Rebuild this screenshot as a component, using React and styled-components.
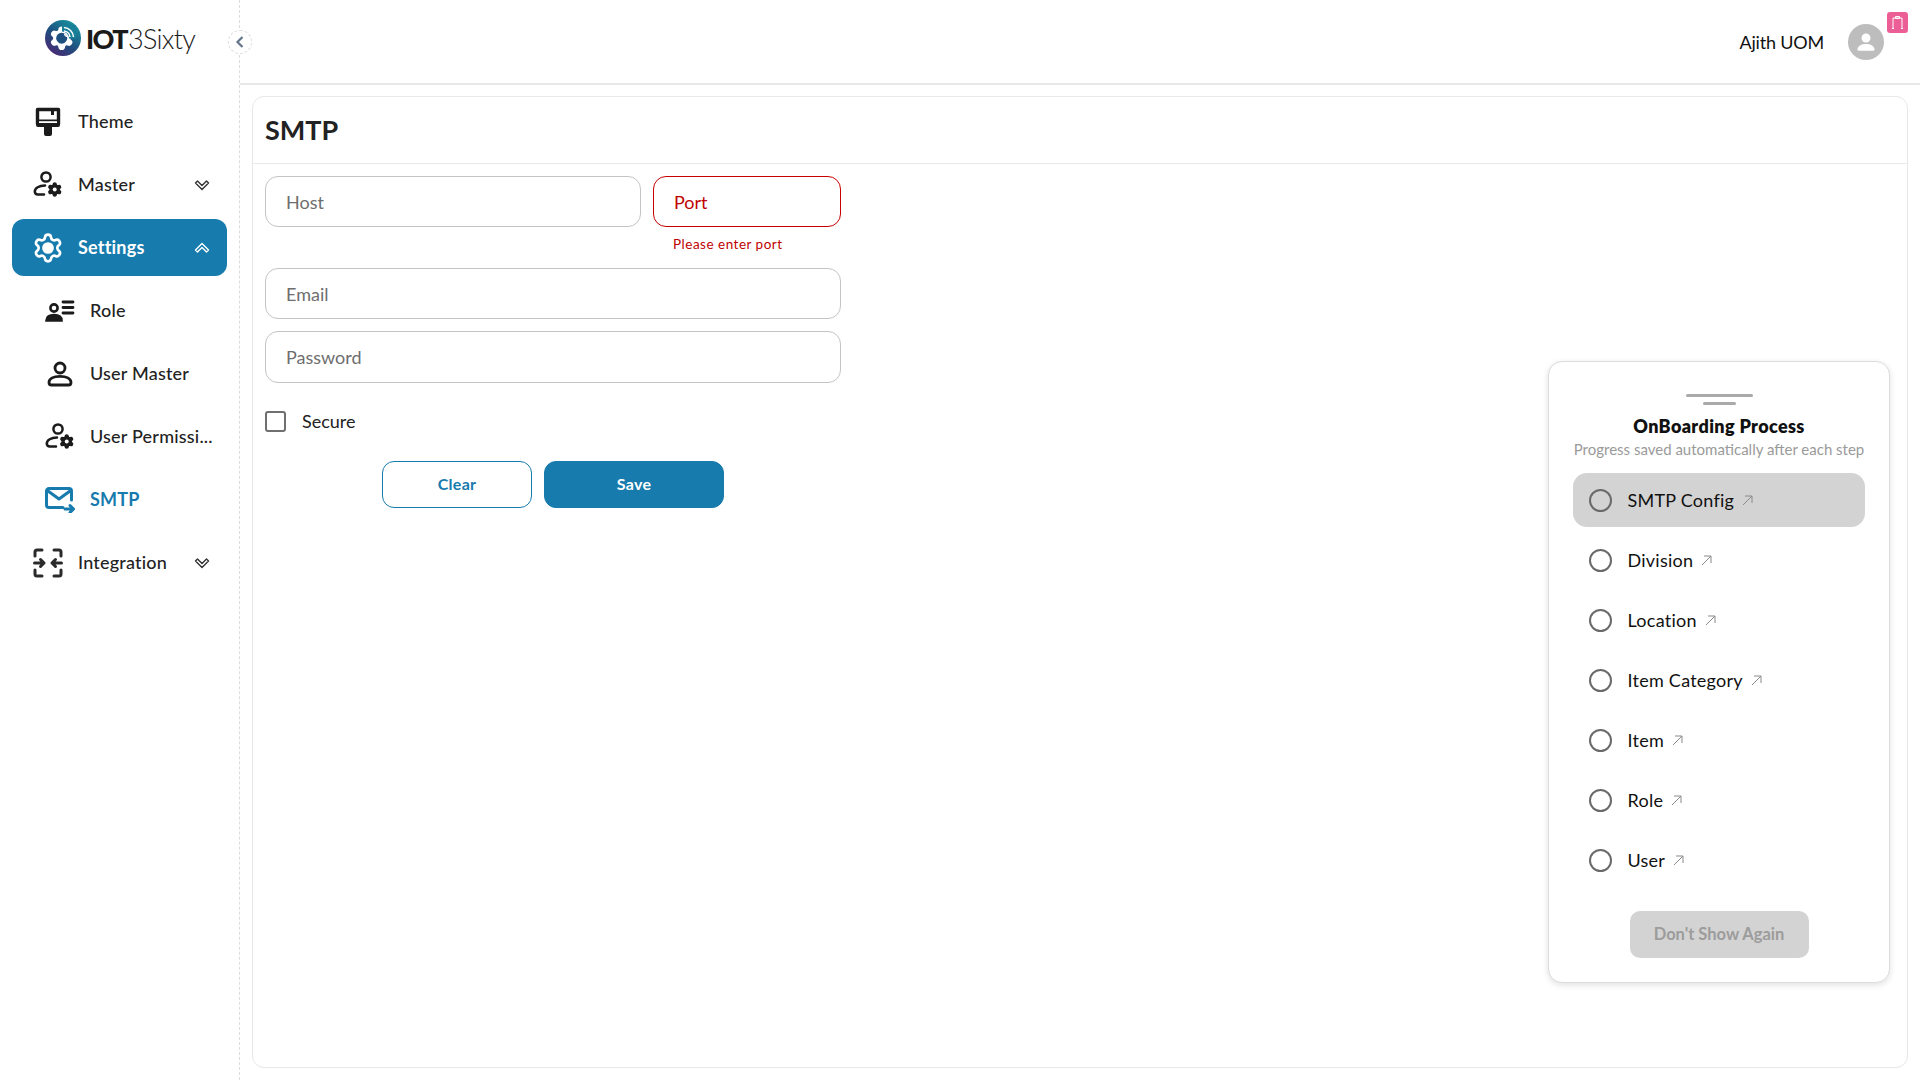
import React from "react";
import styled, { createGlobalStyle } from "styled-components";

const BLUE = "#177bad";
const INK = "#222222";
const FONT = `"Lato", "Noto Sans", sans-serif`;
const GEAR = "M9.671 4.136a2.34 2.34 0 0 1 4.659 0 2.34 2.34 0 0 0 3.319 1.915 2.34 2.34 0 0 1 2.33 4.033 2.34 2.34 0 0 0 0 3.831 2.34 2.34 0 0 1-2.33 4.033 2.34 2.34 0 0 0-3.319 1.915 2.34 2.34 0 0 1-4.659 0 2.34 2.34 0 0 0-3.32-1.915 2.34 2.34 0 0 1-2.33-4.033 2.34 2.34 0 0 0 0-3.831A2.34 2.34 0 0 1 6.35 6.051a2.34 2.34 0 0 0 3.319-1.915";

const Global = createGlobalStyle`
  html, body { margin: 0; padding: 0; background: #fff; }
  body { font-family: ${FONT}; color: ${INK}; }
  * { box-sizing: border-box; }
`;

const Page = styled.div`
  display: flex;
  width: 1920px;
  height: 1080px;
  overflow: hidden;
  position: relative;
  background: #fff;
`;
const Sidebar = styled.aside`
  position: relative;
  flex: 0 0 240px;
  width: 240px;
  min-width: 0;
  height: 100%;
  border-right: 1px dashed #dcdcdc;
  padding: 0 12px;
`;
const LogoRow = styled.div`
  display: flex;
  align-items: center;
  gap: 5px;
  height: 76px;
  padding: 0 0 0 33px;
`;
const LogoText = styled.div`
  font-size: 27px;
  line-height: 1;
  color: #1a1a1a;
  font-weight: 300;
  letter-spacing: -0.7px;
  white-space: nowrap;
  margin-top: 1px;
  b { font-weight: 900; letter-spacing: -1.6px; margin-right: 1px; }
`;
const Collapse = styled.button`
  position: absolute;
  top: 30px;
  right: -13px;
  width: 24px;
  height: 24px;
  border-radius: 50%;
  background: #fff;
  border: 1px dashed #dcdcdc;
  display: flex;
  align-items: center;
  justify-content: center;
  padding: 0;
`;
const Nav = styled.nav`
  display: flex;
  flex-direction: column;
  gap: 6px;
  margin-top: 17px;
`;
const NavItem = styled.div`
  display: flex;
  align-items: center;
  min-width: 0;
  height: 57px;
  border-radius: 12px;
  padding-left: ${(p) => (p.$sub ? "32px" : "20px")};
  padding-right: 17px;
  background: ${(p) => (p.$active ? BLUE : "transparent")};
  color: ${(p) => (p.$active ? "#fff" : p.$current ? BLUE : INK)};
  font-weight: ${(p) => (p.$active || p.$current ? 700 : 500)};
`;
const NavIcon = styled.span`
  flex: 0 0 32px;
  width: 32px;
  height: 32px;
  margin-right: 14px;
  display: flex;
  align-items: center;
  justify-content: center;
`;
const NavLabel = styled.span`
  flex: 1;
  min-width: 0;
  font-size: 18px;
  letter-spacing: 0.2px;
  white-space: nowrap;
  padding-bottom: 2px;
`;
const Main = styled.main`
  flex: 1;
  display: flex;
  flex-direction: column;
  min-width: 0;
`;
const Topbar = styled.header`
  flex: 0 0 85px;
  display: flex;
  align-items: center;
  justify-content: flex-end;
  padding: 0 36px 0 0;
  border-bottom: 2px solid #e8e8e8;
  position: relative;
`;
const UserName = styled.span`
  font-size: 18px;
  color: #111;
  margin-right: 24px;
  letter-spacing: -0.2px;
`;
const Avatar = styled.span`
  width: 36px;
  height: 36px;
  border-radius: 50%;
  background: #bdbdbd;
  display: flex;
  align-items: center;
  justify-content: center;
`;
const Badge = styled.span`
  position: absolute;
  top: 12px;
  right: 12px;
  width: 21px;
  height: 21px;
  border-radius: 3px;
  background: #ec5f96;
  display: flex;
  align-items: center;
  justify-content: center;
`;
const Content = styled.div`
  flex: 1;
  padding: 11px 12px 12px 12px;
  min-height: 0;
`;
const Card = styled.section`
  height: 100%;
  border: 1px solid #e8e8e8;
  border-radius: 12px;
`;
const CardHead = styled.div`
  height: 67px;
  display: flex;
  align-items: center;
  padding: 0 12px;
  border-bottom: 1px solid #e8e8e8;
`;
const Title = styled.h1`
  margin: 0 0 2px;
  font-size: 27px;
  font-weight: 700;
  color: #222;
`;
const Form = styled.form`
  width: 588px;
  margin: 12px 0 0 12px;
  display: flex;
  flex-direction: column;
`;
const HostRow = styled.div`
  display: grid;
  grid-template-columns: 376px 188px;
  gap: 12px;
  height: 92px;
`;
const Field = styled.div`
  display: flex;
  flex-direction: column;
`;
const Input = styled.input`
  width: ${(p) => (p.$wide ? "576px" : "100%")};
  height: ${(p) => (p.$tall ? "52px" : "51px")};
  border-radius: 13px;
  border: 1px solid ${(p) => (p.$error ? "#c80000" : "#c4c4c4")};
  padding: 0 20px;
  font-family: ${FONT};
  font-size: 18px;
  background: #fff;
  outline: none;
  &::placeholder { color: ${(p) => (p.$error ? "#c00000" : "#6e6e6e")}; opacity: 1; }
`;
const ErrorText = styled.span`
  color: #c00000;
  font-size: 13.5px;
  line-height: 16px;
  letter-spacing: 0.5px;
  margin: 9px 0 0 20px;
`;
const WideRows = styled.div`
  display: flex;
  flex-direction: column;
  gap: 12px;
`;
const SecureRow = styled.label`
  display: flex;
  align-items: center;
  gap: 16px;
  margin-top: 27px;
  height: 22px;
  font-size: 18px;
  color: #222;
`;
const CheckBox = styled.span`
  width: 21px;
  height: 21px;
  border: 2.5px solid #6f6f6f;
  border-radius: 3px;
  display: block;
`;
const Actions = styled.div`
  display: flex;
  gap: 12px;
  margin: 29px 0 0 117px;
`;
const Btn = styled.button`
  width: ${(p) => (p.$solid ? "180px" : "150px")};
  height: 47px;
  padding: 0 0 2px;
  border-radius: 12px;
  border: 1px solid ${BLUE};
  background: ${(p) => (p.$solid ? BLUE : "#fff")};
  color: ${(p) => (p.$solid ? "#fff" : BLUE)};
  font-family: ${FONT};
  font-size: 16px;
  font-weight: 700;
  letter-spacing: 0.3px;
`;
const Panel = styled.aside`
  position: absolute;
  left: 1548px;
  top: 361px;
  width: 342px;
  height: 622px;
  background: #fff;
  border: 1px solid #dcdcdc;
  border-radius: 14px;
  box-shadow: 0 2px 6px rgba(0, 0, 0, 0.12);
  padding: 32px 24px 0;
  display: flex;
  flex-direction: column;
  align-items: center;
`;
const Handle = styled.span`
  display: block;
  height: 3px;
  border-radius: 2px;
  background: #aaaaaa;
  width: ${(p) => p.$w}px;
  margin-bottom: 5px;
`;
const PanelTitle = styled.h2`
  margin: 4px 0 0;
  font-size: 18px;
  line-height: 24px;
  font-weight: 800;
  letter-spacing: 0.35px;
  color: #111;
`;
const PanelSub = styled.p`
  margin: 1px 0 0;
  font-size: 15px;
  line-height: 20px;
  color: #9a9a9a;
  white-space: nowrap;
`;
const Steps = styled.ul`
  list-style: none;
  margin: 14px 0 0;
  padding: 0;
  width: 292px;
  display: flex;
  flex-direction: column;
  gap: 6px;
`;
const Step = styled.li`
  display: flex;
  align-items: center;
  height: 54px;
  padding-left: 16px;
  border-radius: 14px;
  background: ${(p) => (p.$on ? "#d3d3d3" : "transparent")};
  font-size: 18px;
  letter-spacing: 0.25px;
  color: #111;
`;
const Radio = styled.span`
  width: 23px;
  height: 23px;
  border-radius: 50%;
  border: 2px solid #6a6a6a;
  margin-right: 15.5px;
`;
const StepArrow = styled.svg`
  width: 11px;
  height: 11px;
  margin-left: 8px;
`;
const DontShow = styled.button`
  margin-top: 23.5px;
  width: 179px;
  height: 47px;
  border: none;
  border-radius: 10px;
  background: #d3d3d3;
  color: #9c9c9c;
  font-family: ${FONT};
  font-size: 16.5px;
  font-weight: 700;
`;

const Chevrons = ({ up, color }) => (
  <svg width="16" height="12" viewBox="0 0 16 12">
    <path d="M1.5 4 3.5 2 8 6.5 12.5 2 14.5 4 8 10.5Z" fill="none" stroke={color} strokeWidth="1.4" strokeLinejoin="round" transform={up ? "rotate(180 8 6)" : undefined} />
  </svg>
);

const SmallGear = ({ x, y, s, c }) => (
  <g transform={`translate(${x} ${y}) scale(${s})`}>
    <path d={GEAR} fill={c} stroke={c} strokeWidth="2" />
    <circle cx="12" cy="12" r="3" fill="#fff" stroke="none" />
  </g>
);

const IconTheme = () => (
  <svg width="26" height="30" viewBox="0 0 26 30">
    <path d="M2.5 2.5h21v14.500h-21z" fill="none" stroke="#1b1b1b" strokeWidth="3.400" strokeLinejoin="round" />
    <path d="M1 12.500h24v5.500a2 2 0 0 1-2 2H17v7a2 2 0 0 1-2 2h-4a2 2 0 0 1-2-2v-7H3a2 2 0 0 1-2-2z" fill="#1b1b1b" />
    <path d="M4 14.200h18v1.800H4z" fill="#fff" />
    <path d="M17.500 2v6" stroke="#1b1b1b" strokeWidth="3" />
  </svg>
);
const IconPersonGear = () => (
  <svg width="30" height="30" viewBox="0 0 30 30" fill="none" stroke="#1b1b1b" strokeWidth="2.5" strokeLinecap="round">
    <circle cx="13" cy="7" r="4.6" />
    <path d="M12 15.500C6 15.500 1.800 18 1.800 21.600c0 2 1 2.900 3 2.900H11" />
    <SmallGear x={13.8} y={11.6} s={0.66} c="#1b1b1b" />
  </svg>
);
const IconSettings = () => (
  <svg width="32" height="32" viewBox="0 0 24 24" fill="none" stroke="#fff" strokeWidth="2">
    <path d={GEAR} />
    <circle cx="12" cy="12" r="3.400" fill="#fff" />
  </svg>
);
const IconRole = () => (
  <svg width="30" height="24" viewBox="0 0 30 24" fill="none" stroke="#1b1b1b" strokeWidth="2.6" strokeLinecap="round">
    <circle cx="9" cy="9" r="3.600" />
    <path d="M1.500 21.500c0-3.600 3-5.500 7.500-5.500s7.500 1.900 7.500 5.500z" fill="#1b1b1b" />
    <path d="M18 3h10M18 8.500h10M18 14h10" strokeWidth="2.800" />
  </svg>
);
const IconUser = () => (
  <svg width="26" height="26" viewBox="0 0 26 26" fill="none" stroke="#1b1b1b" strokeWidth="2.800">
    <circle cx="13" cy="7" r="5" />
    <path d="M2 21.500c0-4 4.600-6.200 11-6.200s11 2.200 11 6.200c0 1.600-.8 2.500-2.400 2.500H4.400C2.800 24 2 23.100 2 21.500z" />
  </svg>
);
const IconMail = () => (
  <svg width="30" height="26" viewBox="0 0 30 26" fill="none" stroke={BLUE} strokeWidth="3" strokeLinecap="round" strokeLinejoin="round">
    <path d="M18 20.500H4a2.500 2.500 0 0 1-2.500-2.500V4A2.500 2.500 0 0 1 4 1.500h20A2.500 2.500 0 0 1 26.500 4v9" />
    <path d="M3 4l11 8 11-8" />
    <path d="M20 22h8M25 18.500l3.500 3.500-3.500 3.500" />
  </svg>
);
const IconIntegration = () => (
  <svg width="30" height="30" viewBox="0 0 30 30" fill="none" stroke="#2a2a2a" strokeWidth="3" strokeLinecap="round" strokeLinejoin="round">
    <path d="M9 2H4a2 2 0 0 0-2 2v4M21 2h5a2 2 0 0 1 2 2v4M9 28H4a2 2 0 0 1-2-2v-4M21 28h5a2 2 0 0 0 2-2v-4" />
    <path d="M1.500 15H11M7.500 11.500 11 15l-3.500 3.500M28.500 15H19M22.500 11.500 19 15l3.500 3.500" />
  </svg>
);
const Logo = () => (
  <svg width="36" height="36" viewBox="0 0 36 36">
    <defs>
      <linearGradient id="lg" x1="0.85" y1="0.05" x2="0.2" y2="0.95">
        <stop offset="0" stopColor="#1796a0" />
        <stop offset="0.55" stopColor="#1d4f7f" />
        <stop offset="1" stopColor="#4a2a74" />
      </linearGradient>
    </defs>
    <circle cx="18" cy="18" r="18" fill="url(#lg)" />
    <g transform="translate(3.500 5) scale(1.1)">
      <path d={GEAR} fill="#fff" stroke="#fff" strokeWidth="1.500" />
    </g>
    <circle cx="16.700" cy="18.200" r="5.500" fill="#1d4f7f" />
    <path d="M17 5h14v13.500H24A7 7 0 0 0 17 11.500z" fill="#1a7f98" />
    <path d="M19 7.500a10 10 0 0 1 9.500 9.500M19 11a6.500 6.500 0 0 1 6 6M19 14.500a3 3 0 0 1 2.500 2.500" fill="none" stroke="#fff" strokeWidth="1.500" />
  </svg>
);

const steps = ["SMTP Config", "Division", "Location", "Item Category", "Item", "Role", "User"];

export default function App() {
  return (
    <Page>
      <Global />
      <Sidebar>
        <LogoRow>
          <Logo />
          <LogoText><b>IOT</b>3Sixty</LogoText>
        </LogoRow>
        <Collapse aria-label="collapse">
          <svg width="12" height="14" viewBox="0 0 12 14"><path d="M8.500 2 3.500 7l5 5" fill="none" stroke="#64748b" strokeWidth="2.200" /></svg>
        </Collapse>
        <Nav>
          <NavItem><NavIcon><IconTheme /></NavIcon><NavLabel>Theme</NavLabel></NavItem>
          <NavItem><NavIcon><IconPersonGear /></NavIcon><NavLabel>Master</NavLabel><Chevrons color="#333" /></NavItem>
          <NavItem $active><NavIcon><IconSettings /></NavIcon><NavLabel>Settings</NavLabel><Chevrons up color="#fff" /></NavItem>
          <NavItem $sub><NavIcon><IconRole /></NavIcon><NavLabel>Role</NavLabel></NavItem>
          <NavItem $sub><NavIcon><IconUser /></NavIcon><NavLabel>User Master</NavLabel></NavItem>
          <NavItem $sub><NavIcon><IconPersonGear /></NavIcon><NavLabel>User Permissi...</NavLabel></NavItem>
          <NavItem $sub $current><NavIcon><IconMail /></NavIcon><NavLabel>SMTP</NavLabel></NavItem>
          <NavItem><NavIcon><IconIntegration /></NavIcon><NavLabel>Integration</NavLabel><Chevrons color="#333" /></NavItem>
        </Nav>
      </Sidebar>
      <Main>
        <Topbar>
          <UserName>Ajith UOM</UserName>
          <Avatar>
            <svg width="24" height="24" viewBox="0 0 24 24" fill="#fff">
              <circle cx="12" cy="8" r="4.500" />
              <path d="M3.500 19.500c0-3.500 4-5.500 8.500-5.500s8.500 2 8.500 5.500c0 .8-.5 1.200-1.200 1.200H4.700c-.7 0-1.200-.4-1.200-1.200z" />
            </svg>
          </Avatar>
          <Badge>
            <svg width="13" height="15" viewBox="0 0 13 15" fill="none" stroke="#fff" strokeWidth="1">
              <path d="M2 13V3h9v10M4.500 1.500h4v2h-4zM1 13.500h2M10 13.500h2" />
            </svg>
          </Badge>
        </Topbar>
        <Content>
          <Card>
            <CardHead><Title>SMTP</Title></CardHead>
            <Form>
              <HostRow>
                <Field><Input placeholder="Host" /></Field>
                <Field>
                  <Input placeholder="Port" $error />
                  <ErrorText>Please enter port</ErrorText>
                </Field>
              </HostRow>
              <WideRows>
                <Input placeholder="Email" $wide />
                <Input placeholder="Password" $wide $tall />
              </WideRows>
              <SecureRow><CheckBox />Secure</SecureRow>
              <Actions>
                <Btn type="button">Clear</Btn>
                <Btn type="button" $solid>Save</Btn>
              </Actions>
            </Form>
          </Card>
        </Content>
      </Main>
      <Panel>
        <Handle $w={67} />
        <Handle $w={33} />
        <PanelTitle>OnBoarding Process</PanelTitle>
        <PanelSub>Progress saved automatically after each step</PanelSub>
        <Steps>
          {steps.map((s, i) => (
            <Step key={s} $on={i === 0}>
              <Radio />
              {s}
              <StepArrow viewBox="0 0 11 11" fill="none" stroke="#8a8a8a" strokeWidth="1">
                <path d="M1 10 10 1M3 1h7v7" />
              </StepArrow>
            </Step>
          ))}
        </Steps>
        <DontShow>Don't Show Again</DontShow>
      </Panel>
    </Page>
  );
}
